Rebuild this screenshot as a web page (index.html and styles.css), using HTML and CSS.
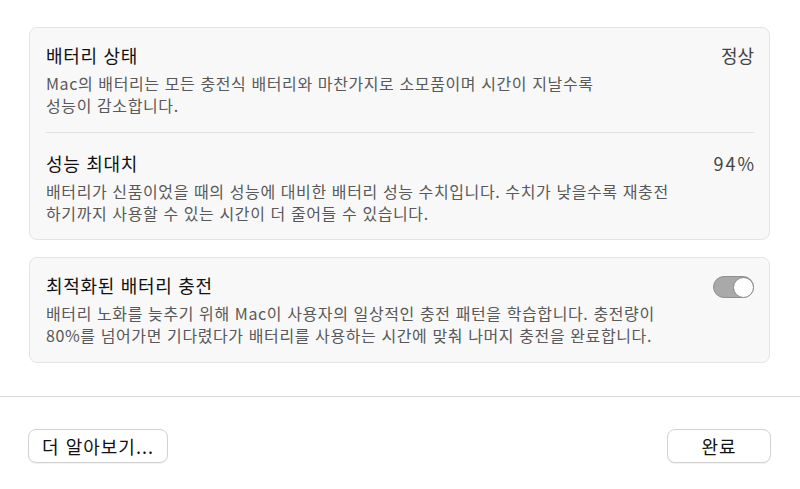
FILE: index.html
```html
<!DOCTYPE html>
<html lang="ko">
<head>
<meta charset="utf-8">
<link rel="stylesheet" href="styles.css">
</head>
<body>
<div class="content">
  <section class="card">
    <div class="row">
      <div class="text">
        <div class="title">배터리 상태</div>
        <div class="desc">Mac의 배터리는 모든 충전식 배터리와 마찬가지로 소모품이며 시간이 지날수록<br>성능이 감소합니다.</div>
      </div>
      <div class="value">정상</div>
    </div>
    <div class="divider"></div>
    <div class="row row2">
      <div class="text">
        <div class="title">성능 최대치</div>
        <div class="desc">배터리가 신품이었을 때의 성능에 대비한 배터리 성능 수치입니다. 수치가 낮을수록 재충전<br>하기까지 사용할 수 있는 시간이 더 줄어들 수 있습니다.</div>
      </div>
      <div class="value num">94%</div>
    </div>
  </section>
  <section class="card">
    <div class="row">
      <div class="text">
        <div class="title">최적화된 배터리 충전</div>
        <div class="desc">배터리 노화를 늦추기 위해 Mac이 사용자의 일상적인 충전 패턴을 학습합니다. 충전량이<br>80%를 넘어가면 기다렸다가 배터리를 사용하는 시간에 맞춰 나머지 충전을 완료합니다.</div>
      </div>
      <div class="toggle"><span class="knob"></span></div>
    </div>
  </section>
</div>
<footer class="footer">
  <button class="btn btn-more">더 알아보기...</button>
  <button class="btn btn-done">완료</button>
</footer>
</body>
</html>
```
FILE: styles.css
```css
html, body {
  margin: 0;
  padding: 0;
  background: #ffffff;
}
body {
  width: 800px;
  height: 489px;
  overflow: hidden;
  font-family: "Noto Sans CJK KR", "Noto Sans", sans-serif;
  color: #1d1d1d;
}
.content {
  padding: 27px 30px 0 29px;
  display: flex;
  flex-direction: column;
  gap: 17px;
}
.card {
  background: #f8f8f8;
  border: 1px solid #e4e4e4;
  border-radius: 8px;
  padding: 0 15px 0 16px;
}
.row {
  display: flex;
  justify-content: space-between;
  align-items: flex-start;
  padding: 16px 0 16px;
}
.row2 {
  padding-top: 19px;
  padding-bottom: 15px;
}
.title {
  font-size: 18px;
  letter-spacing: 0.7px;
  line-height: 22px;
  color: #111;
  margin-bottom: 6px;
}
.desc {
  font-size: 16px;
  letter-spacing: 0.6px;
  line-height: 22px;
  color: #595959;
}
.value {
  font-size: 18px;
  line-height: 22px;
  color: #444;
}
.num {
  letter-spacing: 2px;
  margin-right: -2px;
}
.divider {
  height: 1px;
  background: #e0e0e0;
}
.toggle {
  width: 41px;
  height: 22px;
  box-sizing: border-box;
  border-radius: 11px;
  background: #a9a9a9;
  border: 1px solid #8f8f8f;
  display: flex;
  justify-content: flex-end;
  align-items: center;
  margin-top: 2px;
}
.knob {
  width: 21px;
  height: 21px;
  box-sizing: border-box;
  border-radius: 50%;
  background: #ffffff;
  border: 1px solid #8a8a8a;
  margin-right: -1px;
}
.footer {
  margin-top: 33px;
  border-top: 1px solid #d9d9d9;
  padding: 32px 29px 0 28px;
  display: flex;
  justify-content: space-between;
}
.btn {
  height: 34px;
  box-sizing: border-box;
  background: #ffffff;
  border: 1px solid #d2d2d2;
  border-radius: 8px;
  box-shadow: 0 1px 1px rgba(0,0,0,0.06);
  font-family: "Noto Sans CJK KR", "Noto Sans", sans-serif;
  font-size: 18px;
  letter-spacing: 1px;
  color: #111;
  padding: 0;
}
.btn-more { width: 140px; }
.btn-done { width: 104px; }
```
